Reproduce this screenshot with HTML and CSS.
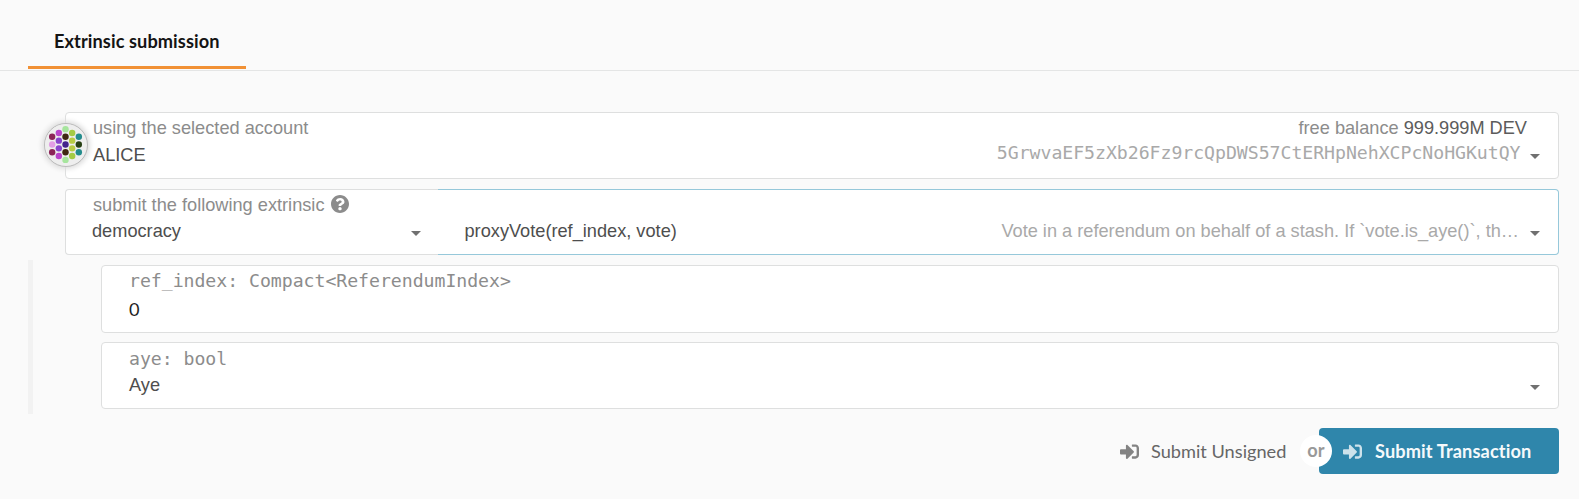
FILE: index.html
```html
<!DOCTYPE html>
<html lang="en">
<head>
<meta charset="utf-8">
<title>Extrinsic submission</title>
<link rel="stylesheet" href="styles.css">
</head>
<body>
<svg width="0" height="0" class="defs">
  <symbol id="signin" viewBox="0 0 512 512"><path fill="currentColor" d="M416 448h-84c-6.600 0-12-5.400-12-12v-40c0-6.600 5.400-12 12-12h84c17.700 0 32-14.300 32-32V160c0-17.700-14.300-32-32-32h-84c-6.600 0-12-5.400-12-12V76c0-6.600 5.400-12 12-12h84c53 0 96 43 96 96v192c0 53-43 96-96 96zm-47-201L201 79c-15-15-41-4.500-41 17v96H24c-13.300 0-24 10.700-24 24v96c0 13.300 10.700 24 24 24h136v96c0 21.500 26 32 41 17l168-168c9.300-9.400 9.300-24.600 0-34z"/></symbol>
</svg>
<nav class="tabs"><a class="tab">Extrinsic submission</a></nav>
<main class="content">
  <section class="field account">
    <svg class="identicon" viewBox="0 0 64 64">
      <circle cx="32" cy="32" r="32" fill="#eee"/>
      <circle cx="32" cy="8" r="5" fill="#a6e59d"/>
      <circle cx="32" cy="20" r="5" fill="#3f2713"/>
      <circle cx="21.600" cy="14" r="5" fill="#b944cb"/>
      <circle cx="11.200" cy="20" r="5" fill="#8c2458"/>
      <circle cx="21.600" cy="26" r="5" fill="#8844cb"/>
      <circle cx="11.200" cy="32" r="5" fill="#e29de5"/>
      <circle cx="11.200" cy="44" r="5" fill="#8c2458"/>
      <circle cx="21.600" cy="38" r="5" fill="#8844cb"/>
      <circle cx="21.600" cy="50" r="5" fill="#b944cb"/>
      <circle cx="32" cy="56" r="5" fill="#a6e59d"/>
      <circle cx="32" cy="44" r="5" fill="#3f2713"/>
      <circle cx="42.400" cy="50" r="5" fill="#a5cb44"/>
      <circle cx="52.800" cy="44" r="5" fill="#248c8c"/>
      <circle cx="42.400" cy="38" r="5" fill="#b9cb44"/>
      <circle cx="52.800" cy="32" r="5" fill="#273f13"/>
      <circle cx="52.800" cy="20" r="5" fill="#248c8c"/>
      <circle cx="42.400" cy="26" r="5" fill="#b9cb44"/>
      <circle cx="42.400" cy="14" r="5" fill="#a5cb44"/>
      <circle cx="32" cy="32" r="5" fill="#44248c"/>
    </svg>
    <div class="row label"><span>using the selected account</span><span class="balance">free balance <b>999.999M DEV</b></span></div>
    <div class="row value"><span class="name">ALICE</span><span class="mono address">5GrwvaEF5zXb26Fz9rcQpDWS57CtERHpNehXCPcNoHGKutQY</span><i class="caret"></i></div>
  </section>
  <section class="extrinsic">
    <div class="field module">
      <div class="row label"><span>submit the following extrinsic</span>
        <svg class="help" viewBox="8 8 496 496"><path fill="currentColor" d="M504 256c0 137-111 248-248 248S8 393 8 256C8 119.100 119 8 256 8s248 111.100 248 248zM262.700 90c-54.500 0-89.300 23-116.500 63.800-3.500 5.300-2.400 12.400 2.700 16.300l34.700 26.300c5.200 3.900 12.600 3 16.700-2.100 17.900-22.700 30.100-35.800 57.300-35.800 20.400 0 45.700 13.100 45.700 33 0 15-12.400 22.700-32.500 34C247 238.500 216 254.900 216 296v4c0 6.600 5.400 12 12 12h56c6.600 0 12-5.400 12-12v-1.300c0-28.500 83.200-29.600 83.200-106.700 0-58-60.200-102-116.500-102zM256 338c-25.400 0-46 20.600-46 46s20.600 46 46 46 46-20.600 46-46-20.600-46-46-46z"/></svg>
      </div>
      <div class="row value"><span class="name">democracy</span><i class="caret"></i></div>
    </div>
    <div class="field method">
      <div class="row value"><span class="name">proxyVote(ref_index, vote)</span><span class="doc">Vote in a referendum on behalf of a stash. If `vote.is_aye()`, th…</span><i class="caret"></i></div>
    </div>
  </section>
  <div class="params">
    <section class="field number">
      <div class="row label mono">ref_index: Compact&lt;ReferendumIndex&gt;</div>
      <div class="row value">0</div>
    </section>
    <section class="field choice">
      <div class="row label mono">aye: bool</div>
      <div class="row value"><span class="name">Aye</span><i class="caret"></i></div>
    </section>
  </div>
  <div class="actions">
    <button class="btn plain"><svg class="icon"><use href="#signin"/></svg>Submit Unsigned</button>
    <button class="btn primary"><svg class="icon"><use href="#signin"/></svg>Submit Transaction<span class="or">or</span></button>
  </div>
</main>
</body>
</html>
```
FILE: styles.css
```css
* { box-sizing: border-box; }
body { margin: 0; height: 499px; overflow: hidden; background: #fafafa; font: 18.2px/26px "Liberation Sans", Arial, sans-serif; color: #4e4e4e; }
.defs { position: absolute; }
.tabs { display: flex; height: 71px; padding-left: 28px; border-bottom: 1px solid #e4e5e5; }
.tab { width: 218px; height: 69px; padding: 28px 0 0 26px; border-bottom: 3px solid #f19135; font: 700 18.2px/26px Lato, sans-serif; font-variant-ligatures: none; letter-spacing: .08px; color: #141414; white-space: nowrap; }
.content { padding: 41px 20px 0 28px; }
.field { position: relative; background: #fff; border: 1px solid #dedfdf; border-radius: 4px; padding: 2px 18px 0 27px; }
.row { display: flex; height: 26px; white-space: nowrap; }
.label { color: #8c8c8c; }
.label b { font-weight: 400; color: #5c5c5c; }
.name { flex: 1; }
.mono { font-family: "DejaVu Sans Mono", monospace; line-height: 28px; letter-spacing: -.04px; }
.account { height: 67px; margin-left: 37px; }
.account .label { justify-content: space-between; }
.account .value { margin-top: 1px; }
.balance { margin-right: 13px; }
.address { color: #a9a9a9; margin: -3px -4.500px 0 0; }
.identicon { position: absolute; left: -22px; top: 10px; width: 44px; height: 44px; border: 1px solid #bbb; border-radius: 50%; padding: 0 1px 1px 0; background: #eee; box-shadow: 0 0 5px 2px #ddd; }
.caret { width: 0; height: 0; margin: 13px 0 0 14px; border: 5px solid transparent; border-top-color: #707070; border-bottom: 0; }
.account .caret { margin-top: 12px; }
.extrinsic { display: flex; height: 66px; margin: 10px 0 0 37px; }
.module { width: 373px; border-right: 0; border-radius: 4px 0 0 4px; }
.module .caret { margin-right: -1px; }
.module .name { margin-left: -1px; }
.method { flex: 1; border-color: #96c8da; border-left: 0; border-radius: 0 4px 4px 0; padding: 28px 18px 0 26.5px; }
.doc { color: #a9a9a9; margin-right: -3px; }
.help { width: 18px; height: 18px; margin: 3px 0 0 6.500px; }
.params { height: 154px; margin-top: 5px; border-left: 5px solid #f2f2f2; padding: 5px 0 0 68px; }
.number { height: 68px; padding-top: 1px; }
.number .value { margin-top: 3px; color: #1f1f1f; font-family: Lato, sans-serif; }
.choice { height: 67px; margin-top: 9px; }
.choice .value { margin-top: 1px; }
.actions { display: flex; justify-content: flex-end; height: 46px; margin-top: 14px; }
.btn { position: relative; display: flex; align-items: center; border: 0; margin: 0; background: none; font: 400 18.2px/26px Lato, sans-serif; font-variant-ligatures: none; color: #666; border-radius: 4px; white-space: nowrap; }
.plain { width: 199px; padding: 0; }
.primary { width: 240px; padding: 0 0 0 25px; background: #2f86ab; color: #f5f9fb; font-weight: 700; letter-spacing: .12px; }
.icon { width: 19px; height: 19px; margin-right: 12px; opacity: .8; }
.primary .icon { margin-left: -1px; margin-right: 13px; }
.or { position: absolute; left: -19px; top: 7px; width: 32px; height: 32px; border-radius: 50%; background: #fff; color: #999; text-align: center; line-height: 31px; }
```
